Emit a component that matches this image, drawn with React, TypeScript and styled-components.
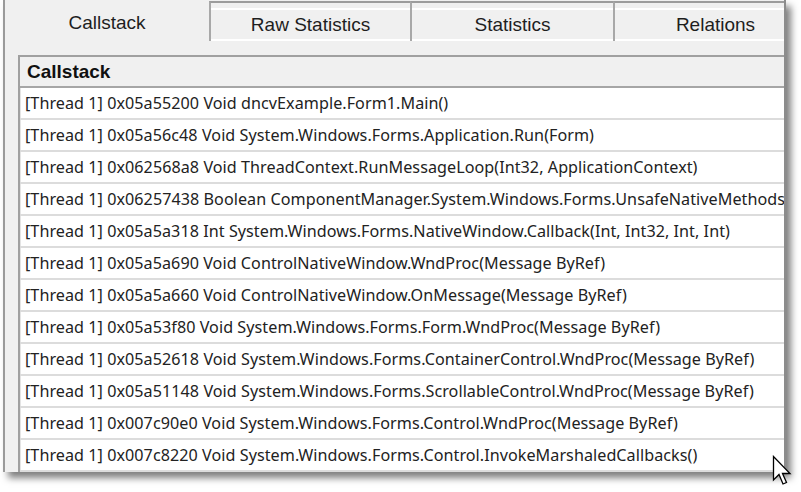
import React from 'react';
import styled, { createGlobalStyle } from 'styled-components';

const frames = [
  '0x05a55200 Void dncvExample.Form1.Main()',
  '0x05a56c48 Void System.Windows.Forms.Application.Run(Form)',
  '0x062568a8 Void ThreadContext.RunMessageLoop(Int32, ApplicationContext)',
  '0x06257438 Boolean ComponentManager.System.Windows.Forms.UnsafeNativeMethods',
  '0x05a5a318 Int System.Windows.Forms.NativeWindow.Callback(Int, Int32, Int, Int)',
  '0x05a5a690 Void ControlNativeWindow.WndProc(Message ByRef)',
  '0x05a5a660 Void ControlNativeWindow.OnMessage(Message ByRef)',
  '0x05a53f80 Void System.Windows.Forms.Form.WndProc(Message ByRef)',
  '0x05a52618 Void System.Windows.Forms.ContainerControl.WndProc(Message ByRef)',
  '0x05a51148 Void System.Windows.Forms.ScrollableControl.WndProc(Message ByRef)',
  '0x007c90e0 Void System.Windows.Forms.Control.WndProc(Message ByRef)',
  '0x007c8220 Void System.Windows.Forms.Control.InvokeMarshaledCallbacks()',
];

const tabs = ['Callstack', 'Raw Statistics', 'Statistics', 'Relations'];
const tabWidths = [204, 201, 203, 203];

export default function App() {
  return (
    <>
      <GlobalStyle />
      <Page>
        <Window>
          <TabBar>
            {tabs.map((label, i) => (
              <Tab key={label} $active={i === 0} $width={tabWidths[i]}>
                {label}
              </Tab>
            ))}
          </TabBar>
          <Body>
            <Grid>
              <HeaderCell>Callstack</HeaderCell>
              {frames.map((f) => (
                <Row key={f}>[Thread 1] {f}</Row>
              ))}
            </Grid>
          </Body>
        </Window>
        <Cursor width="22" height="34" viewBox="0 0 22 34">
          <path
            d="M1.5 1.5 L1.5 25 L7 19.5 L11 29 L14.5 27.5 L10.5 18.5 L18 18.5 Z"
            fill="#fff"
            stroke="#000"
            strokeWidth="1.3"
            strokeLinejoin="miter"
          />
        </Cursor>
      </Page>
    </>
  );
}

const GlobalStyle = createGlobalStyle`
  html, body {
    margin: 0;
    background: #ffffff;
  }
  body {
    font-family: "Noto Sans", "Open Sans", sans-serif;
  }
`;

const Page = styled.div`
  position: relative;
  width: 801px;
  height: 492px;
  padding-left: 3px;
  box-sizing: border-box;
`;

const Window = styled.div`
  width: 783px;
  height: 472px;
  box-sizing: border-box;
  background: #f0f0f0;
  border-left: 2px solid #9a9a9a;
  border-right: 2px solid #8c8c8c;
  box-shadow: 5px 6px 7px rgba(0, 0, 0, 0.5);
  display: flex;
  flex-direction: column;
  overflow: hidden;
`;

const TabBar = styled.div`
  display: flex;
  height: 42px;
  flex-shrink: 0;
`;

const Tab = styled.div<{ $active: boolean; $width: number }>`
  flex: 0 0 ${(p) => p.$width}px;
  box-sizing: border-box;
  display: flex;
  align-items: center;
  justify-content: center;
  font-family: "Liberation Sans", Arial, sans-serif;
  font-size: 19px;
  color: #1e1e1e;
  white-space: nowrap;
  ${(p) =>
    p.$active
      ? `
    height: 42px;
    padding-top: 3px;
    background: #f0f0f0;
  `
      : `
    margin-top: 1px;
    height: 40px;
    padding-top: 6px;
    border-top: 2px solid #9c9c9c;
    border-left: 2px solid #a8a8a8;
    background: linear-gradient(
      to bottom,
      #f0f0f0 0 5px,
      #ffffff 5px 7px,
      #f0f0f0 7px calc(100% - 2px),
      #ffffff calc(100% - 2px)
    );
  `}
`;

const Body = styled.div`
  flex: 1;
  padding: 13px 0 0 13px;
  display: flex;
  min-height: 0;
`;

const Grid = styled.div`
  flex: 1;
  background: #ffffff;
  border-top: 2px solid #a0a0a0;
  border-left: 2px solid #a0a0a0;
  box-shadow: inset 1px 1px 0 #e4e4e4;
  overflow: hidden;
  display: flex;
  flex-direction: column;
`;

const HeaderCell = styled.div`
  flex: 0 0 31px;
  box-sizing: border-box;
  display: flex;
  align-items: center;
  padding-left: 7px;
  background: #f0f0f0;
  border-bottom: 2px solid #a6a6a6;
  font-family: "Liberation Sans", Arial, sans-serif;
  font-weight: 700;
  font-size: 19px;
  color: #101010;
`;

const Row = styled.div`
  flex: 0 0 32px;
  box-sizing: border-box;
  display: flex;
  align-items: center;
  padding-left: 5px;
  border-bottom: 2px solid #dcdcdc;
  font-size: 16.15px;
  letter-spacing: 0.05px;
  color: #222;
  white-space: nowrap;
  overflow: hidden;
`;

const Cursor = styled.svg`
  position: absolute;
  left: 772px;
  top: 455px;
`;
